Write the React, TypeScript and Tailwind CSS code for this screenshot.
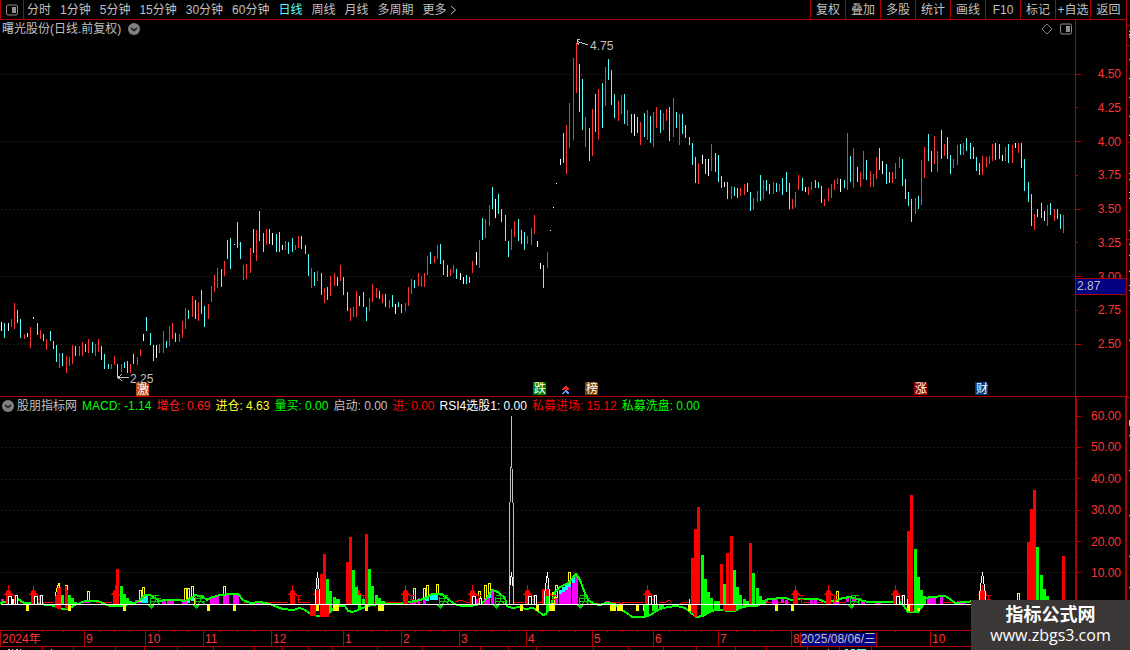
type Candle = [x: number, high: number, low: number, kind: "r" | "c" | "w"];
type Bar = [left: number, right: number, top: number, bottom: number];

const KIND_COLORS = { r: "#ff3232", c: "#54ffff", w: "#ffffff" };

const PERIODS = ["分时", "1分钟", "5分钟", "15分钟", "30分钟", "60分钟", "日线", "周线", "月线", "多周期", "更多"];
const TOOLS = ["复权", "叠加", "多股", "统计", "画线", "F10", "标记", "+自选", "返回"];
const PRICES = ["4.50", "4.25", "4.00", "3.75", "3.50", "3.25", "3.00", "2.75", "2.50"];
const LEVELS = ["60.00", "", "50.00", "", "40.00", "", "30.00", "", "20.00", "", "10.00"];

const LEGEND = [
  { label: "MACD: -1.14", color: "text-[#00ff00]" },
  { label: "增仓: 0.69", color: "text-[#ff1e1e]" },
  { label: "进仓: 4.63", color: "text-[#ffff2a]" },
  { label: "量买: 0.00", color: "text-[#00ff00]" },
  { label: "启动: 0.00", color: "text-[#c0c0c0]" },
  { label: "进: 0.00", color: "text-[#ff0000]" },
  { label: "RSI4选股1: 0.00", color: "text-white" },
  { label: "私募进场: 15.12", color: "text-[#ff0000]" },
  { label: "私募洗盘: 0.00", color: "text-[#00ff00]" },
];

// size is the share of the time axis that the month takes
const MONTHS = [
  { label: "2024年", size: 84 }, { label: "9", size: 61 }, { label: "10", size: 58 }, { label: "11", size: 68 },
  { label: "12", size: 72 }, { label: "1", size: 58 }, { label: "2", size: 58 }, { label: "3", size: 67 },
  { label: "4", size: 66 }, { label: "5", size: 61 }, { label: "6", size: 65 }, { label: "7", size: 73 },
  { label: "8", size: 139, cursor: "2025/08/06/三" }, { label: "10", size: 196 },
];

const EVENTS = [
  { x: 136, y: 383, label: "激", color: "#c04a10" },
  { x: 533, y: 382, label: "跌", color: "#008000" },
  { x: 585, y: 382, label: "榜", color: "#804000" },
  { x: 914, y: 382, label: "涨", color: "#960000" },
  { x: 975, y: 382, label: "财", color: "#003878" },
];

const CANDLES: Candle[] = [
  [1, 322, 331, "w"], [4, 323, 338, "c"], [8, 323, 331, "w"], [11, 319, 327, "r"], [14, 303, 329, "r"], [17, 310, 323, "c"],
  [20, 319, 338, "c"], [24, 334, 339, "r"], [27, 333, 337, "w"], [30, 327, 348, "r"], [33, 317, 319, "c"], [37, 323, 335, "c"],
  [40, 330, 339, "r"], [43, 334, 341, "c"], [46, 339, 350, "r"], [50, 331, 341, "c"], [53, 341, 349, "c"], [56, 345, 362, "c"],
  [59, 353, 368, "r"], [62, 353, 366, "c"], [66, 356, 373, "r"], [69, 357, 366, "r"], [72, 345, 364, "r"], [75, 346, 356, "c"],
  [79, 346, 356, "r"], [82, 342, 356, "r"], [85, 344, 352, "c"], [88, 339, 353, "r"], [92, 342, 353, "c"], [95, 344, 356, "r"],
  [98, 339, 352, "r"], [101, 346, 360, "c"], [104, 354, 369, "c"], [108, 364, 369, "c"], [111, 364, 369, "r"], [114, 356, 365, "r"],
  [117, 364, 378, "c"], [121, 364, 372, "r"], [124, 362, 368, "c"], [127, 361, 373, "c"], [130, 364, 373, "r"], [133, 354, 364, "c"],
  [137, 357, 365, "r"], [140, 349, 356, "r"], [143, 334, 341, "w"], [146, 317, 331, "c"], [150, 333, 345, "c"], [153, 345, 361, "c"],
  [156, 345, 358, "w"], [159, 344, 353, "r"], [163, 331, 353, "r"], [166, 341, 348, "c"], [169, 326, 346, "r"], [172, 323, 339, "r"],
  [175, 333, 342, "c"], [179, 334, 342, "r"], [182, 321, 338, "r"], [185, 308, 329, "r"], [188, 310, 319, "c"], [192, 296, 317, "r"],
  [195, 300, 319, "c"], [198, 302, 321, "r"], [201, 290, 314, "c"], [204, 306, 327, "c"], [208, 304, 319, "r"], [211, 286, 302, "r"],
  [214, 275, 292, "r"], [217, 268, 288, "r"], [221, 269, 287, "c"], [224, 261, 276, "r"], [227, 240, 259, "c"], [230, 238, 269, "c"],
  [234, 244, 245, "w"], [237, 222, 248, "c"], [240, 242, 259, "c"], [243, 265, 280, "r"], [246, 264, 279, "r"], [250, 248, 273, "r"],
  [253, 229, 253, "c"], [256, 230, 261, "r"], [259, 211, 241, "c"], [263, 233, 252, "c"], [266, 229, 245, "r"], [269, 229, 244, "c"],
  [272, 233, 245, "w"], [276, 234, 252, "c"], [279, 232, 252, "c"], [282, 245, 250, "w"], [285, 241, 250, "r"], [288, 242, 254, "c"],
  [292, 238, 252, "c"], [295, 245, 250, "r"], [298, 236, 248, "r"], [301, 236, 249, "c"], [305, 245, 254, "c"], [308, 254, 276, "c"],
  [311, 268, 288, "r"], [314, 272, 286, "c"], [317, 271, 281, "r"], [321, 273, 295, "c"], [324, 288, 303, "r"], [327, 287, 300, "c"],
  [330, 276, 296, "r"], [334, 273, 286, "r"], [337, 277, 286, "c"], [340, 265, 281, "r"], [343, 277, 295, "c"], [347, 292, 311, "c"],
  [350, 308, 321, "r"], [353, 307, 317, "r"], [356, 291, 317, "r"], [359, 296, 306, "c"], [363, 292, 307, "c"], [366, 307, 321, "c"],
  [369, 298, 311, "r"], [372, 284, 302, "r"], [376, 288, 298, "r"], [379, 291, 299, "c"], [382, 294, 303, "r"], [385, 294, 307, "c"],
  [389, 300, 308, "r"], [392, 295, 307, "c"], [395, 304, 314, "w"], [398, 302, 307, "c"], [401, 304, 313, "c"], [405, 303, 311, "r"],
  [408, 287, 306, "r"], [411, 279, 294, "r"], [414, 280, 288, "c"], [418, 273, 286, "r"], [421, 276, 287, "r"], [424, 273, 287, "r"],
  [427, 256, 275, "r"], [430, 252, 264, "c"], [434, 256, 263, "r"], [437, 245, 259, "r"], [440, 244, 264, "c"], [443, 260, 275, "c"],
  [447, 265, 277, "c"], [450, 269, 276, "r"], [453, 265, 273, "r"], [456, 269, 279, "c"], [460, 273, 280, "w"], [463, 277, 284, "w"],
  [466, 275, 284, "c"], [469, 277, 283, "c"], [472, 261, 273, "r"], [476, 252, 265, "w"], [479, 240, 268, "r"], [482, 218, 240, "c"],
  [485, 219, 238, "r"], [489, 205, 226, "r"], [492, 187, 209, "c"], [495, 199, 218, "w"], [498, 194, 214, "c"], [501, 209, 222, "c"],
  [505, 215, 241, "c"], [508, 241, 257, "c"], [511, 229, 250, "r"], [514, 221, 237, "r"], [518, 219, 241, "c"], [521, 230, 244, "c"],
  [524, 232, 250, "c"], [527, 236, 244, "r"], [531, 228, 245, "r"], [534, 215, 234, "r"], [537, 241, 247, "w"], [540, 263, 269, "w"],
  [543, 265, 288, "c"], [547, 252, 268, "r"], [550, 230, 231, "w"], [553, 207, 208, "w"], [556, 183, 184, "w"], [560, 159, 165, "w"],
  [563, 133, 163, "c"], [566, 125, 174, "r"], [569, 103, 148, "r"], [573, 58, 140, "r"], [576, 43, 93, "r"], [579, 64, 112, "c"],
  [582, 79, 130, "c"], [585, 117, 147, "r"], [589, 128, 161, "c"], [592, 109, 156, "r"], [595, 94, 132, "c"], [598, 89, 140, "r"],
  [602, 83, 128, "c"], [605, 67, 106, "r"], [608, 59, 80, "c"], [611, 70, 105, "c"], [614, 94, 118, "c"], [618, 101, 121, "r"],
  [621, 95, 114, "r"], [624, 94, 124, "c"], [627, 110, 126, "r"], [631, 114, 133, "c"], [634, 114, 136, "w"], [637, 117, 133, "c"],
  [640, 122, 145, "r"], [644, 113, 137, "c"], [647, 110, 140, "r"], [650, 116, 143, "c"], [653, 112, 147, "r"], [656, 107, 128, "r"],
  [660, 110, 133, "c"], [663, 113, 130, "r"], [666, 109, 121, "r"], [669, 107, 141, "c"], [673, 98, 137, "r"], [676, 112, 128, "c"],
  [679, 114, 145, "r"], [682, 114, 134, "c"], [685, 125, 138, "c"], [689, 137, 145, "c"], [692, 143, 165, "c"], [695, 157, 183, "c"],
  [698, 163, 184, "r"], [702, 155, 164, "w"], [705, 159, 174, "c"], [708, 159, 176, "w"], [711, 144, 171, "r"], [715, 153, 172, "c"],
  [718, 155, 182, "c"], [721, 176, 188, "c"], [724, 182, 187, "w"], [727, 182, 199, "c"], [731, 186, 199, "r"], [734, 187, 196, "c"],
  [737, 188, 198, "c"], [740, 188, 196, "r"], [744, 184, 195, "r"], [747, 183, 192, "c"], [750, 192, 211, "c"], [753, 198, 210, "r"],
  [757, 191, 202, "r"], [760, 175, 201, "c"], [763, 180, 199, "r"], [766, 180, 191, "c"], [769, 184, 194, "c"], [773, 182, 194, "r"],
  [776, 183, 192, "c"], [779, 184, 191, "r"], [782, 178, 195, "c"], [786, 172, 192, "c"], [789, 183, 209, "c"], [792, 199, 209, "r"],
  [795, 192, 207, "r"], [798, 175, 190, "r"], [802, 178, 191, "c"], [805, 187, 192, "w"], [808, 187, 195, "r"], [811, 182, 190, "r"],
  [815, 180, 188, "c"], [818, 182, 188, "c"], [821, 186, 203, "c"], [824, 199, 206, "r"], [828, 188, 201, "r"], [831, 184, 198, "r"],
  [834, 180, 190, "r"], [837, 178, 184, "r"], [840, 179, 192, "w"], [844, 180, 188, "c"], [847, 133, 190, "r"], [850, 156, 182, "c"],
  [853, 148, 188, "r"], [857, 167, 182, "c"], [860, 172, 187, "r"], [863, 151, 179, "r"], [866, 160, 180, "c"], [870, 171, 187, "r"],
  [873, 174, 187, "r"], [876, 157, 179, "r"], [879, 148, 170, "c"], [882, 161, 174, "w"], [886, 164, 184, "c"], [889, 172, 183, "c"],
  [892, 172, 183, "r"], [895, 163, 179, "r"], [899, 157, 168, "r"], [902, 159, 186, "c"], [905, 179, 199, "c"], [908, 192, 206, "c"],
  [911, 199, 222, "c"], [915, 198, 214, "r"], [918, 196, 209, "c"], [921, 160, 205, "r"], [924, 147, 178, "r"], [928, 134, 161, "c"],
  [931, 151, 172, "c"], [934, 136, 164, "r"], [937, 151, 172, "r"], [941, 130, 159, "c"], [944, 144, 156, "r"], [947, 137, 159, "c"],
  [950, 155, 174, "c"], [953, 159, 168, "r"], [957, 145, 165, "r"], [960, 144, 155, "c"], [963, 143, 155, "r"], [966, 138, 151, "c"],
  [970, 143, 159, "c"], [973, 147, 159, "c"], [976, 157, 171, "c"], [979, 163, 175, "c"], [982, 156, 175, "r"], [986, 157, 167, "r"],
  [989, 156, 164, "r"], [992, 144, 161, "r"], [995, 143, 160, "c"], [999, 144, 159, "c"], [1002, 155, 161, "w"], [1005, 147, 161, "r"],
  [1008, 144, 163, "c"], [1012, 145, 163, "r"], [1015, 143, 148, "w"], [1018, 143, 153, "r"], [1021, 143, 168, "c"], [1024, 159, 191, "c"],
  [1028, 182, 202, "c"], [1031, 194, 226, "c"], [1034, 214, 230, "r"], [1037, 209, 217, "c"], [1041, 203, 218, "c"], [1044, 211, 221, "w"],
  [1047, 205, 226, "r"], [1050, 203, 215, "c"], [1054, 209, 221, "r"], [1057, 209, 219, "c"], [1060, 214, 229, "c"], [1063, 215, 233, "r"],
];

const RED_BARS: Bar[] = [
  [55, 58, 595, 608], [57, 61, 587, 609], [65, 68, 586, 609], [116, 119, 569, 605], [113, 116, 598, 605],
  [310, 316, 605, 616], [320, 323, 574, 617], [323, 326, 554, 617], [326, 329, 605, 617], [346, 349, 562, 605],
  [349, 352, 537, 605], [365, 368, 534, 605], [542, 550, 589, 605], [691, 694, 558, 613], [694, 697, 529, 617],
  [697, 700, 507, 605], [720, 723, 564, 605], [723, 736, 605, 611], [726, 729, 553, 611], [730, 733, 536, 611],
  [749, 752, 543, 605], [907, 910, 531, 605], [910, 913, 495, 612], [1027, 1030, 542, 605], [1030, 1033, 509, 605],
  [1033, 1036, 490, 605], [1062, 1065, 556, 605],
];

const GREEN_BARS: Bar[] = [
  [61, 64, 595, 605], [68, 71, 595, 605], [71, 74, 598, 605], [74, 77, 602, 605], [120, 123, 586, 605], [123, 126, 594, 605],
  [126, 129, 598, 605], [129, 132, 601, 605], [326, 329, 579, 605], [329, 332, 591, 612], [333, 336, 597, 605], [336, 340, 599, 605],
  [352, 355, 570, 605], [355, 358, 587, 605], [358, 361, 595, 610], [362, 365, 599, 605], [368, 371, 569, 605], [371, 374, 586, 605],
  [375, 378, 595, 605], [378, 381, 598, 605], [381, 385, 601, 605], [546, 549, 596, 612], [644, 649, 605, 616], [652, 658, 605, 611],
  [659, 664, 605, 609], [701, 704, 555, 616], [704, 707, 579, 615], [707, 710, 592, 613], [710, 713, 598, 610], [714, 720, 601, 610],
  [723, 726, 584, 605], [733, 736, 570, 605], [736, 739, 587, 610], [739, 742, 595, 608], [743, 746, 599, 607], [746, 749, 601, 606],
  [752, 755, 573, 605], [756, 759, 588, 605], [759, 762, 596, 605], [762, 766, 600, 605], [914, 917, 549, 612], [917, 920, 577, 608],
  [920, 923, 590, 608], [923, 926, 596, 605], [1036, 1039, 547, 605], [1040, 1043, 575, 605], [1043, 1046, 589, 605], [1046, 1049, 596, 605],
];

const MAGENTA_BARS: Bar[] = [
  [1, 4, 599, 603], [82, 90, 601, 603], [135, 142, 600, 603], [162, 166, 600, 604], [167, 174, 599, 604], [182, 188, 599, 604],
  [210, 213, 598, 604], [213, 219, 596, 604], [223, 229, 594, 604], [233, 239, 593, 604], [255, 262, 601, 604], [410, 416, 601, 604],
  [418, 420, 598, 604], [423, 426, 598, 604], [476, 480, 599, 604], [484, 487, 596, 604], [487, 490, 595, 604], [491, 494, 590, 604],
  [555, 558, 597, 604], [559, 562, 594, 604], [562, 565, 592, 604], [565, 568, 590, 604], [568, 571, 587, 604], [572, 575, 583, 604],
  [575, 578, 574, 604], [605, 610, 601, 604], [765, 768, 600, 602], [772, 778, 599, 604], [781, 784, 599, 603], [785, 788, 600, 604],
  [810, 813, 600, 604], [814, 817, 600, 604], [833, 839, 601, 604], [846, 849, 597, 602], [852, 855, 597, 601], [861, 865, 600, 604],
  [875, 881, 601, 604], [927, 936, 597, 604], [940, 943, 597, 604], [957, 965, 601, 604],
];

const CYAN_BARS: Bar[] = [
  [142, 148, 596, 603], [187, 190, 598, 603], [191, 194, 596, 601], [426, 429, 596, 601], [430, 438, 594, 600], [488, 491, 593, 598],
  [559, 562, 590, 594], [562, 565, 587, 592], [565, 568, 584, 590], [568, 571, 582, 587], [572, 575, 577, 583],
];

const YELLOW_BARS: Bar[] = [
  [26, 29, 605, 611], [68, 71, 605, 611], [123, 126, 605, 611], [207, 210, 605, 611], [233, 236, 605, 611], [316, 319, 605, 611],
  [333, 339, 605, 611], [365, 368, 605, 611], [378, 384, 605, 611], [520, 523, 605, 611], [536, 539, 605, 611], [549, 555, 605, 611],
  [610, 616, 605, 611], [617, 623, 605, 611], [636, 639, 605, 611], [643, 646, 605, 611], [688, 691, 605, 611], [775, 778, 605, 611],
  [791, 794, 605, 611], [907, 910, 605, 611], [917, 920, 605, 611],
];

const YELLOW_FRAMES: Bar[] = [
  [87, 90, 591, 600], [139, 142, 590, 601], [142, 145, 587, 597], [184, 187, 588, 600], [187, 190, 588, 598], [191, 194, 586, 597],
  [223, 226, 586, 595], [413, 416, 588, 600], [423, 426, 588, 599], [426, 429, 585, 596], [436, 439, 584, 594], [478, 481, 591, 603],
  [484, 487, 585, 598], [488, 491, 583, 594], [552, 555, 592, 603], [555, 558, 585, 597], [568, 571, 572, 583], [836, 839, 591, 601],
  [1017, 1020, 593, 604],
];

const WHITE_FRAMES: Bar[] = [
  [8, 12, 596, 604], [12, 14, 599, 604], [15, 18, 595, 604], [34, 38, 596, 604], [40, 43, 595, 604], [472, 476, 596, 604],
  [479, 482, 598, 604], [528, 532, 596, 604], [534, 537, 595, 604], [648, 652, 596, 604], [654, 657, 595, 604], [896, 900, 596, 604],
  [902, 905, 595, 604],
];

const BUY_MARKS = [8, 33, 115, 292, 317, 357, 405, 472, 527, 547, 647, 795, 828, 895, 982];
const SELL_MARKS = [151, 196, 440, 496, 580, 851];

const GREEN_CURVE =
  "0,603 5,602 12,602 18,599 24,603 50,605 57,607 62,609 68,609 75,605 80,603 85,601 98,601 105,604 110,606 122,606 128,604 135,603 140,600 145,595 150,595 155,598 160,601 165,600 178,600 185,601 190,599 195,595 203,597 207,600 210,598 220,595 230,594 238,594 243,600 250,603 260,602 270,604 277,607 283,609 293,610 300,608 305,610 312,615 320,616 328,614 333,609 338,606 345,606 348,611 353,612 358,610 365,607 372,605 380,604 400,604 410,602 420,600 426,598 432,594 442,594 448,599 453,603 457,605 463,606 470,606 480,604 485,601 492,590 498,592 505,598 507,606 512,608 520,607 525,609 533,608 538,611 543,615 546,614 549,607 552,602 555,592 560,587 568,583 576,574 580,580 584,591 588,600 595,604 600,605 606,603 615,604 620,609 627,613 632,617 645,617 650,615 655,612 660,609 668,607 677,606 685,608 690,612 696,617 703,616 709,612 715,610 722,610 728,611 735,611 740,608 748,606 757,606 763,602 768,599 785,598 792,600 800,599 818,599 825,602 835,601 843,598 850,597 860,600 868,602 900,602 903,605 908,612 918,612 922,607 926,598 931,597 945,596 950,599 955,603 975,601";

const RED_LINE =
  "M20,602H54M96,602L112,602M128,602H142M243,602H247M262,603L268,602H288M298,602H310M372,602H402M414,602H422M455,602L460,600L466,602H470M513,602H524M536,602H543M590,603H600M610,602H618L621,604L624,602H643M659,602H666L669,600L672,603M680,604L684,602H690M758,602H790M803,602H823M838,602H846M866,601H894M944,602H972M985,602H1026M1050,602H1062";

const bars = (list: Bar[], color: string) => (
  <g fill={color}>
    {list.map(([left, right, top, bottom]) => (
      <rect key={`${left}-${top}`} x={left} y={top} width={right - left} height={bottom - top} />
    ))}
  </g>
);

const frames = (list: Bar[], color: string) => (
  <g fill="#000000" stroke={color}>
    {list.map(([left, right, top, bottom]) => (
      <rect key={left} x={left + 0.5} y={top + 0.5} width={right - left - 1} height={bottom - top} />
    ))}
  </g>
);

const PanelIcon = ({ className }: { className: string }) => (
  <svg className={className} viewBox="0 0 12 12" fill="none">
    <rect x="0.5" y="1" width="11" height="10" rx="1.5" stroke="currentColor" />
    <rect x="6" y="3" width="4" height="6" fill="currentColor" />
  </svg>
);

const CollapseIcon = () => (
  <svg className="size-3" viewBox="0 0 12 12" fill="none">
    <circle cx="6" cy="6" r="6" fill="#808080" />
    <path d="M3 5L6 7.5L9 5" stroke="#101010" strokeWidth="1.4" />
  </svg>
);

const Toolbar = () => (
  <nav className="flex h-5 items-stretch overflow-hidden border-b border-[#b00000] whitespace-nowrap">
    <button aria-label="侧栏" className="flex w-6 shrink-0 items-center justify-center border-x border-[#b00000] text-[#909090]">
      <PanelIcon className="size-3" />
    </button>
    <div className="flex flex-1 items-center gap-[9px] overflow-hidden pl-[3px]">
      {PERIODS.map((period) => (
        <button key={period} className={period === "日线" ? "text-[#54ffff]" : "text-[#c0c0c0]"}>
          {period}
        </button>
      ))}
      <svg className="-ml-1.5 h-3 w-2" viewBox="0 0 8 12" fill="none">
        <path d="M1 2L5.5 6L1 10" stroke="#c0c0c0" />
      </svg>
    </div>
    {TOOLS.map((tool) => (
      <button key={tool} className="w-[35px] shrink-0 border-l border-[#b00000] last:w-9">
        {tool}
      </button>
    ))}
  </nav>
);

const PriceChart = () => (
  <svg className="block w-full" viewBox="0 38 1075 358" shapeRendering="crispEdges">
    <path
      d="M1 74.5H1075M1 141.5H1075M1 209.5H1075M1 276.5H1075M1 344.5H1075"
      stroke="#b00000"
      strokeDasharray="1 3"
    />
    {CANDLES.map(([x, high, low, kind]) => (
      <rect key={x} x={x} y={high} width="1" height={low - high} fill={KIND_COLORS[kind]} />
    ))}
    <g stroke="#c0c0c0" fill="none">
      <path d="M118 377.5H129M122 374.5L118 377.5L122 381" />
      <path d="M577 41.5L588 45M580 39.5H577V42L579 45" />
    </g>
    <g fill="#c0c0c0" fontSize="12">
      <text x="130" y="383">2.25</text>
      <text x="590" y="50">4.75</text>
    </g>
    {EVENTS.map((event) => (
      <g key={event.label}>
        <path d={`M${event.x} ${event.y}h11l2 2v11h-13z`} fill={event.color} />
        <text x={event.x + 1} y={event.y + 11} fill="#ffffff" fontSize="12">
          {event.label}
        </text>
      </g>
    ))}
    <path d="M565 386H566L569 389V390H567L565.500 389L564 390H562V389Z" fill="#ff2020" />
    <path d="M565 390H566L569 393V394H567L565.500 392L564 394H562V393Z" fill="#54a0ff" />
  </svg>
);

const IndicatorChart = () => (
  <svg className="block w-full" viewBox="0 414 1075 216" shapeRendering="crispEdges">
    <path
      d="M1 447.5H1075M1 479.5H1075M1 510.5H1075M1 541.5H1075M1 572.5H1075"
      stroke="#b00000"
      strokeDasharray="1 3"
    />
    <path d={RED_LINE} stroke="#ff0000" fill="none" />
    {bars(MAGENTA_BARS, "#ff00ff")}
    {bars(CYAN_BARS, "#00ffff")}
    {frames(YELLOW_FRAMES, "#ffff00")}
    <polyline points={GREEN_CURVE} stroke="#00ff00" strokeWidth="2" fill="none" />
    {BUY_MARKS.map((x) => (
      <g key={x} transform={`translate(${x} 585)`}>
        <path d="M0 0H1V4L5 10H3V19H-2V10H-4L0 4Z" fill="#ff0000" />
        <path d="M4 10.5H10M6.500 10V18M5 14.5H9" stroke="#e00000" />
      </g>
    ))}
    {bars(YELLOW_BARS, "#ffff00")}
    {bars(RED_BARS, "#ff0000")}
    {bars(GREEN_BARS, "#00ff00")}
    <path d="M55 596L57 588L59 583L60 588M65 585H67L68 590M194 604V598M689 604V599M907 599V604" stroke="#ffff00" fill="none" />
    {frames(WHITE_FRAMES, "#ffffff")}
    <path d="M1 604.5H975" stroke="#ffffff" />
    {SELL_MARKS.map((x) => (
      <g key={x} transform={`translate(${x} 595)`}>
        <path d="M-3 10H3V11L0 14L-3 11Z" fill="#00d000" />
        <path d="M0 0.500H8M-1 3.500H10M4.500 0V6M0 6.500H9M2 9L5 6M6 7L9 9M-0.500 2V10" stroke="#00d000" fill="none" />
      </g>
    ))}
    <g stroke="#ffffff" fill="none">
      <path d="M315.500 604V595L317.500 572L319.500 595V604" />
      <path d="M509.500 604V590L511.500 572L513.500 590V604" />
      <path d="M544.500 604V595L547.500 572L549.500 595V604" />
      <path d="M979.500 604V595L982.500 572L985.500 595V604" />
    </g>
    <path d="M509.500 604V520L511.500 450V416V450L513.500 520V604" stroke="#c0c0c0" fill="none" />
  </svg>
);

const PriceAxis = () => (
  <div className="relative flex w-[51px] shrink-0 flex-col justify-between border-l border-[#b00000] pt-[46px] pb-11">
    {PRICES.map((price, i) => (
      <div key={price} className="flex h-4 items-center justify-between pr-[5px] text-[#ff3232]">
        <span className={i % 2 ? "h-px w-0.5 bg-[#b00000]" : "h-px w-[5px] bg-[#b00000]"} />
        {price}
      </div>
    ))}
    {/* Price under the cursor */}
    <div className="absolute inset-x-0 top-[258px] h-[17px] border-y border-[#b00000] bg-[#000080] pl-px leading-[15px]">
      2.87
    </div>
  </div>
);

const LevelAxis = () => (
  <div className="flex w-[51px] shrink-0 flex-col justify-between border-r border-l-2 border-[#b00000] pt-[13px] pb-[51px]">
    {LEVELS.map((level, i) => (
      <div key={i} className="flex h-3 items-center justify-between pr-1 text-[#ff3232]">
        <span className={level ? "h-px w-1 bg-[#b00000]" : "h-px w-px bg-[#b00000]"} />
        {level}
      </div>
    ))}
  </div>
);

const TimeAxis = () => {
  let start = 0;
  const ticks = MONTHS.map(({ size }) => {
    const quarter = size / 4;
    const d = `M${start} 0V3M${start + quarter} 0V2M${start + quarter * 2} 0V2M${start + quarter * 3} 0V2`;
    start += size;
    return d;
  }).join("");

  return (
    <div>
      <svg className="block h-[3px] w-full" viewBox="0 0 1126 3" preserveAspectRatio="none" shapeRendering="crispEdges">
        <path d={`M0 0.500H1126${ticks}`} stroke="#b00000" />
      </svg>
      <div
        className="grid h-[14px] border-b border-[#b00000] leading-[13px] text-[#ff3232]"
        style={{ gridTemplateColumns: MONTHS.map((month) => `minmax(0, ${month.size}fr)`).join(" ") }}
      >
        {MONTHS.map((month, i) => (
          <div key={i} className="flex overflow-hidden border-l border-[#b00000] pl-px whitespace-nowrap">
            {month.label}
            {month.cursor && (
              <span className="border-x border-[#b00000] bg-[#000080] text-[#c0c0c0]">{month.cursor}</span>
            )}
          </div>
        ))}
      </div>
      <svg className="block h-[3px] w-full" viewBox="0 0 1126 3" preserveAspectRatio="none" shapeRendering="crispEdges">
        <path
          d="M42.500 0V3M73.500 0V3M115.500 0V3M144.500 0V3M177.500 0V3M213.500 0V3M254.500 0V3M282.500 0V3M308.500 0V3M332.500 0V3M377.500 0V3M422.500 0V3M480.500 0V3M508.500 0V3M536.500 0V3M593.500 0V3M628.500 0V3M663.500 0V3M696.500 0V3M735.500 0V3M766.500 0V3M807.500 0V3M839.500 0V3M871.500 0V3"
          stroke="#b00000"
        />
        <path d="M8 2.500H10M12 2.500H13M16 2.500H18M20 2.500H21M51 2.500H52M828 2.500H829" stroke="#c0c0c0" />
        <path d="M845 2.500H848M851 2.500H855M857 2.500H866" stroke="#54ffff" />
      </svg>
    </div>
  );
};

const App = () => {
  return (
    <div className="relative flex min-h-screen overflow-hidden bg-black font-['Liberation_Sans','Noto_Sans_CJK_SC',sans-serif] text-[12px] leading-4 text-[#c0c0c0]">
      <main className="min-w-0 flex-1">
        <Toolbar />

        {/* Price */}
        <section className="flex border-b border-[#b00000]">
          <div className="min-w-0 flex-1">
            <div className="flex h-[18px] items-center gap-[7px] pr-[3px] pl-0.5">
              <h1>曙光股份(日线.前复权)</h1>
              <button aria-label="收起主图">
                <CollapseIcon />
              </button>
              <svg className="ml-auto size-3 text-[#808080]" viewBox="0 0 12 12" fill="none">
                <path d="M6 1L11 6L6 11L1 6Z" stroke="currentColor" />
              </svg>
              <PanelIcon className="size-3 text-[#909090]" />
            </div>
            <PriceChart />
          </div>
          <PriceAxis />
        </section>

        {/* Indicator */}
        <section className="flex">
          <div className="min-w-0 flex-1">
            <div className="flex h-[17px] items-center gap-[5px] overflow-hidden pl-0.5 whitespace-nowrap">
              <button aria-label="收起副图" className="-mr-0.5">
                <CollapseIcon />
              </button>
              <h2>股朋指标网</h2>
              {LEGEND.map((item) => (
                <span key={item.label} className={item.color}>
                  {item.label}
                </span>
              ))}
            </div>
            <IndicatorChart />
          </div>
          <LevelAxis />
        </section>

        <TimeAxis />
      </main>

      {/* Edge of the quote panel */}
      <aside className="w-1 shrink-0 border-l border-[#b00000]">
        <svg className="block h-[650px] w-[3px]" viewBox="0 0 3 650" shapeRendering="crispEdges">
          <path d="M0 25.500H3M0 45.500H3M0 142.500H3M0 239.500H3M0 397.500H3" stroke="#b00000" />
          <path
            d="M2.500 31V32M2.500 34V36M2.500 37V38M2.500 59V60M2.500 78V79M2.500 97V98M2.500 116V117M2.500 135V136M2.500 173V174M2.500 179V180M2.500 192V193M2.500 198V199M2.500 230V231M2.500 244V245M2.500 255V256M2.500 271V272M2.500 285V286M2.500 290V291M2.500 340V341M2.500 420V426M2.500 435V436M2.500 470V471M2.500 515V516M2.500 556V557M2.500 587V588"
            stroke="#c0c0c0"
          />
        </svg>
      </aside>

      {/* Site mark */}
      <div className="absolute right-0 bottom-0 flex h-[50px] w-[159px] flex-col items-center bg-[#3b3737] pt-[5px] text-white">
        <strong className="text-[18px] leading-5">指标公式网</strong>
        <a href="#" className="font-['Open_Sans',sans-serif] text-[16px] leading-5">
          www.zbgs3.com
        </a>
      </div>
    </div>
  );
};

export default App;
